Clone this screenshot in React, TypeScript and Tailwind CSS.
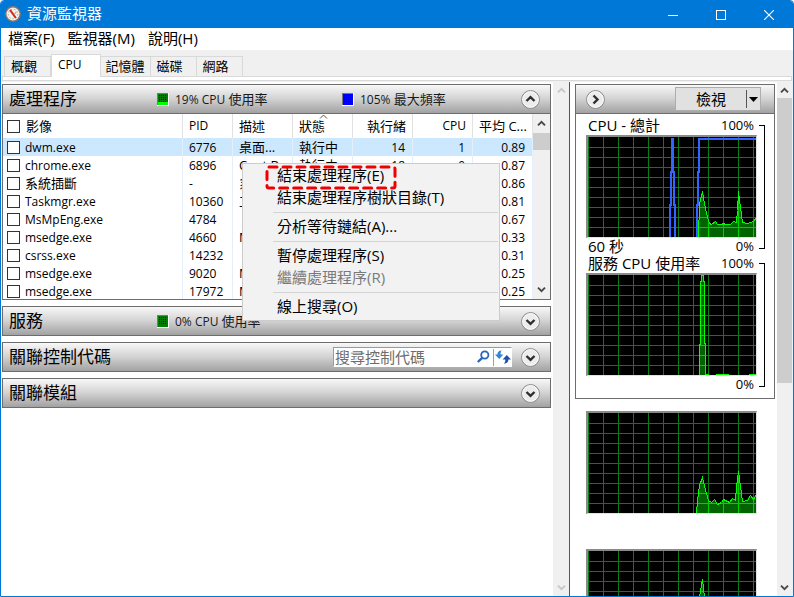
import type { ReactNode } from "react";

type Process = {
  name: string;
  pid: string;
  desc: string;
  status: string;
  threads: string;
  cpu: string;
  avg: string;
};

const processes: Process[] = [
  { name: "dwm.exe", pid: "6776", desc: "桌面...", status: "執行中", threads: "14", cpu: "1", avg: "0.89" },
  { name: "chrome.exe", pid: "6896", desc: "Cent B...", status: "執行中", threads: "18", cpu: "0", avg: "0.87" },
  { name: "系統插斷", pid: "-", desc: "系統...", status: "執行中", threads: "-", cpu: "1", avg: "0.86" },
  { name: "Taskmgr.exe", pid: "10360", desc: "工作...", status: "執行中", threads: "17", cpu: "1", avg: "0.81" },
  { name: "MsMpEng.exe", pid: "4784", desc: "", status: "執行中", threads: "39", cpu: "0", avg: "0.67" },
  { name: "msedge.exe", pid: "4660", desc: "Micro...", status: "執行中", threads: "16", cpu: "0", avg: "0.33" },
  { name: "csrss.exe", pid: "14232", desc: "", status: "執行中", threads: "13", cpu: "0", avg: "0.31" },
  { name: "msedge.exe", pid: "9020", desc: "Micro...", status: "執行中", threads: "45", cpu: "0", avg: "0.25" },
  { name: "msedge.exe", pid: "17972", desc: "Micro...", status: "執行中", threads: "15", cpu: "0", avg: "0.25" },
];

const tabs = ["概觀", "CPU", "記憶體", "磁碟", "網路"];
const menus = ["檔案(F)", "監視器(M)", "說明(H)"];

const cpuTotal =
  "110,100 111,66 113,59 114,54 116,66 119,80 121,86 123,87 127,84 129,87 133,87 135,86 137,87 142,87 145,84 148,85 149,73 150,54 152,70 154,85 159,86 165,84 168,80";
const cpu0 =
  "108,100 109,87 111,72 114,64 116,73 120,87 123,89 126,86 129,91 133,89 135,86 141,89 144,85 147,87 148,73 150,58 152,73 154,88 159,87 162,82 165,86 168,81";
const serviceCpu =
  "111,100 111,69 112,69 112,6 113,6 113,0 115,0 115,6 116,6 116,67 117,69 117,99 120,99 120,100 128,100 128,99 140,99 140,100 161,100 161,99 168,99";
const cpu1 =
  "110,60 111,46 113,34 114,28 116,46 119,70 121,84 127,82 135,85 145,82 149,60 150,50 152,68 154,84 168,80";

export default function App() {
  return (
    <div className="flex h-screen flex-col overflow-hidden rounded-t border border-[#0078d7] bg-white font-['Open_Sans','Noto_Sans_CJK_TC',sans-serif] text-[13px] leading-4 text-black">
      <TitleBar />
      <nav className="flex h-[22px] shrink-0 items-center gap-[13px] px-[7px] pb-[2px] text-[15px] leading-5">
        {menus.map((m) => (
          <button key={m} type="button">
            {m}
          </button>
        ))}
      </nav>

      {/* tab strip */}
      <div className="shrink-0 bg-[#f0f0f0] px-px pb-px pt-1">
        <div role="tablist" className="flex items-end pl-[2px]">
          {tabs.map((t) => (
            <Tab key={t} label={t} active={t === "CPU"} />
          ))}
        </div>
        <div className="h-[5px] border border-[#d9d9d9] bg-white" />
      </div>

      <div className="flex min-h-0 flex-1">
        <main className="flex min-w-0 flex-1 flex-col gap-[6px] overflow-hidden pl-px pr-[2px] pt-[2px]">
          <section className="relative border border-[#6d6d6d]">
            <SectionHeader title="處理程序" open>
              <div className="flex w-[185px] items-center gap-[6px]">
                <Meter kind="green" level={19} />
                <Usage value="19% CPU" label="使用率" />
              </div>
              <div className="flex items-center gap-[6px]">
                <Meter kind="blue" level={0} />
                <Usage value="105%" label="最大頻率" />
              </div>
            </SectionHeader>
            <div className="flex h-[186px] overflow-hidden border-t border-[#6d6d6d]">
              <div className="min-w-0 flex-1">
                <ProcessTable />
              </div>
              <div className="flex w-[17px] flex-col items-center justify-between bg-[#f0f0f0] py-[6px]">
                <div className="flex w-full flex-col items-center gap-[6px]">
                  <Chevron up />
                  <div className="h-[17px] w-full bg-[#cdcdcd]" />
                </div>
                <Chevron />
              </div>
            </div>
            <ContextMenu />
          </section>

          <Section title="服務">
            <div className="flex items-center gap-[6px]">
              <Meter kind="green" level={0} />
              <Usage value="0% CPU" label="使用率" />
            </div>
          </Section>
          <section className="border border-[#6d6d6d]">
            <SectionHeader title="關聯控制代碼" search />
          </section>
          <Section title="關聯模組" />
        </main>

        <div className="flex w-4 shrink-0 flex-col items-center justify-between bg-[#f0f0f0] py-[5px] text-[#b5b5b5]">
          <Chevron up />
          <Chevron />
        </div>

        <Graphs />
      </div>
    </div>
  );
}

function TitleBar() {
  return (
    <header className="flex h-[27px] shrink-0 items-center bg-[#0078d7] pl-[4px] text-white">
      <svg viewBox="0 0 16 16" className="mb-px h-4 w-4">
        <circle cx="8" cy="8" r="7.2" fill="#f4f1ee" stroke="#8b7468" strokeWidth="1.4" />
        <circle cx="8" cy="8" r="4.8" fill="none" stroke="#8fb08c" strokeWidth="1" strokeDasharray="1.5 1.8" />
        <path d="M5 3.8 L10.8 12" stroke="#d02a1c" strokeWidth="2" />
        <path d="M9.4 8.4 L11.2 6" stroke="#b9a58e" strokeWidth="1.2" />
      </svg>
      <h1 className="ml-[6px] flex-1 pb-[3px] text-[15px] leading-5">資源監視器</h1>
      <div className="flex h-full">
        <button type="button" aria-label="最小化" className="grid w-12 place-items-center">
          <svg viewBox="0 0 10 10" className="h-[10px] w-[10px]">
            <path d="M0 5.5 H10" stroke="currentColor" />
          </svg>
        </button>
        <button type="button" aria-label="最大化" className="grid w-12 place-items-center">
          <svg viewBox="0 0 10 10" className="h-[10px] w-[10px]">
            <rect x="0.5" y="0.5" width="9" height="9" fill="none" stroke="currentColor" />
          </svg>
        </button>
        <button type="button" aria-label="關閉" className="grid w-12 place-items-center">
          <svg viewBox="0 0 10 10" className="h-[10px] w-[10px]">
            <path d="M0 0 L10 10 M10 0 L0 10" stroke="currentColor" strokeWidth="1.1" />
          </svg>
        </button>
      </div>
    </header>
  );
}

function Tab({ label, active }: { label: string; active: boolean }) {
  if (active) {
    return (
      <button
        type="button"
        role="tab"
        aria-selected
        className="-mb-px h-[23px] border border-b-0 border-[#d9d9d9] bg-white pb-[2px] pl-[6px] pr-[18px] text-xs"
      >
        {label}
      </button>
    );
  }
  return (
    <button
      type="button"
      role="tab"
      aria-selected={false}
      className="h-5 border border-b-0 border-l-0 border-[#d9d9d9] pb-px pl-[6px] pr-[13px] nth-3:px-[5px] first:border-l"
    >
      {label}
    </button>
  );
}

function Section({ title, children }: { title: string; children?: ReactNode }) {
  return (
    <section className="border border-[#6d6d6d]">
      <SectionHeader title={title}>{children}</SectionHeader>
    </section>
  );
}

function SectionHeader({
  title,
  open,
  search,
  children,
}: {
  title: string;
  open?: boolean;
  search?: boolean;
  children?: ReactNode;
}) {
  return (
    <div className="flex h-[28px] items-center bg-gradient-to-b from-[#f8f8f8] via-[#d2d2d2] to-[#a2a2a2] pl-[6px] pr-[10px]">
      <h2 className="w-[148px] shrink-0 text-[17px] leading-5">{title}</h2>
      <div className="flex flex-1 items-center">{children}</div>
      {search && <SearchBox />}
      <RoundButton label={title}>
        <path d={open ? "M5.5 11 L9.5 7.2 L13.5 11" : "M5.5 8 L9.5 11.8 L13.5 8"} />
      </RoundButton>
    </div>
  );
}

function RoundButton({ label, children }: { label: string; children: ReactNode }) {
  return (
    <button type="button" aria-label={label} className="h-[19px] w-[19px] shrink-0">
      <svg viewBox="0 0 19 19" className="h-[19px] w-[19px]" fill="none">
        <circle cx="9.5" cy="9.5" r="8.9" fill="#ececec" stroke="#858585" />
        <circle cx="9.5" cy="9.5" r="7.8" stroke="#fafafa" />
        <g stroke="#2e2e2e" strokeWidth="2.4">
          {children}
        </g>
      </svg>
    </button>
  );
}

function Usage({ value, label }: { value: string; label: string }) {
  return (
    <p className="whitespace-nowrap text-[#1a1a1a]">
      <span className="text-xs">{value} </span>
      {label}
    </p>
  );
}

function Meter({ kind, level }: { kind: "green" | "blue"; level: number }) {
  const fill = Math.round((level / 100) * 16);
  const dots = [2, 4, 6, 8];
  return (
    <svg viewBox="0 0 12 13" className="h-[13px] w-[12px]" shapeRendering="crispEdges">
      <rect width="12" height="13" fill="#fff" />
      <rect width="11" height="12" fill="#777" />
      <rect x="1" y="1" width="10" height="11" fill={kind === "green" ? "#008000" : "#0000ff"} />
      {dots.map((x) =>
        dots.map((y) => (
          <rect key={`${x}-${y}`} x={x} y={y} width="1" height="1" fill={kind === "green" ? "#002800" : "#0000a8"} />
        )),
      )}
      {fill > 0 && <rect x="1" y={12 - fill} width="10" height={fill} fill="#00ff00" />}
    </svg>
  );
}

function SearchBox() {
  return (
    <div className="mr-[9px] flex h-5 w-[179px] items-center border border-b-white border-l-[#9a9a9a] border-r-white border-t-[#9a9a9a] bg-white">
      <input
        type="text"
        aria-label="搜尋控制代碼"
        placeholder="搜尋控制代碼"
        className="h-full min-w-0 flex-1 pb-px pl-px text-[15px] leading-4 outline-none placeholder:text-[#6d6d6d]"
      />
      <button type="button" aria-label="搜尋">
        <svg viewBox="0 0 14 14" className="h-[14px] w-[14px]" fill="none" stroke="#2a66b8">
          <circle cx="8.8" cy="5" r="3.6" strokeWidth="1.8" />
          <path d="M6.2 7.8 L1.8 12" strokeWidth="2.4" />
        </svg>
      </button>
      <div className="ml-[3px] mr-px h-[17px] w-px bg-[#a0a0a0]" />
      <button type="button" aria-label="重新整理">
        <svg viewBox="0 0 16 14" className="h-[14px] w-4">
          <path d="M6.8 0.4 C3.6 0.6 2.4 2 2.4 4.4 H0 L4.2 9 L8.4 4.4 H5.6 C5.5 2.8 5.8 1.4 6.8 0.4 Z" fill="#2f86d6" />
          <path d="M8.8 13.8 C12 13.6 13.4 12.2 13.4 9.6 H16 L11.8 5 L7.6 9.6 H10.3 C10.4 11.4 10 12.8 8.8 13.8 Z" fill="#1f52a6" />
        </svg>
      </button>
    </div>
  );
}

function Chevron({ up }: { up?: boolean }) {
  return (
    <svg viewBox="0 0 9 7" className="h-[7px] w-[9px]" fill="none">
      <path
        d={up ? "M1 5.4 L4.5 1.9 L8 5.4" : "M1 1.6 L4.5 5.1 L8 1.6"}
        stroke="currentColor"
        strokeWidth="1.9"
        strokeOpacity="0.7"
      />
    </svg>
  );
}

function Check({ label }: { label: string }) {
  return (
    <input
      type="checkbox"
      aria-label={label}
      className="h-[13px] w-[13px] shrink-0 appearance-none border border-[#333] bg-white"
    />
  );
}

function ProcessTable() {
  const head = "border-r border-[#e2e2e2] px-[6px] font-normal";
  const cell = "overflow-hidden whitespace-nowrap border-r border-[#e3f0fb] pl-[6px]";
  return (
    <table className="w-full table-fixed border-separate border-spacing-0">
      <colgroup>
        <col />
        <col className="w-[50px]" />
        <col className="w-[60px]" />
        <col className="w-[60px]" />
        <col className="w-[60px]" />
        <col className="w-[60px]" />
        <col className="w-[60px]" />
      </colgroup>
      <thead>
        <tr className="h-6 text-left text-[13px]">
          <th className="border-r border-[#e2e2e2] pl-1 font-normal">
            <div className="flex items-center gap-[6px]">
              <Check label="影像" />
              影像
            </div>
          </th>
          <th className={`${head} text-xs`}>PID</th>
          <th className={head}>描述</th>
          <th className={`${head} relative`}>
            狀態
            <svg viewBox="0 0 9 5" className="absolute left-1/2 top-0 -ml-1 h-[5px] w-[9px]" fill="none">
              <path d="M1 4.5 L4.5 1 L8 4.5" stroke="#555" />
            </svg>
          </th>
          <th className={`${head} text-right`}>執行緒</th>
          <th className={`${head} text-right text-xs`}>CPU</th>
          <th className={`${head} whitespace-nowrap`}>平均 C...</th>
        </tr>
      </thead>
      <tbody>
        {processes.map((p, i) => (
          <tr key={p.pid} className={i === 0 ? "h-[18px] bg-[#cce8ff]" : "h-[18px]"}>
            <td className="border-r border-[#e3f0fb] pl-1">
              <div className="flex items-center gap-[5px]">
                <Check label={p.name} />
                <span className={p.name === "系統插斷" ? "text-[13px]" : "pt-px text-xs"}>{p.name}</span>
              </div>
            </td>
            <td className={`${cell} pt-px text-xs`}>{p.pid}</td>
            <td className={cell}>{p.desc}</td>
            <td className={cell}>{p.status}</td>
            <td className={`${cell} pr-[7px] pt-px text-right text-xs`}>{p.threads}</td>
            <td className={`${cell} pr-[7px] pt-px text-right text-xs`}>{p.cpu}</td>
            <td className={`${cell} pr-[7px] pt-px text-right text-xs`}>{p.avg}</td>
          </tr>
        ))}
      </tbody>
    </table>
  );
}

function ContextMenu() {
  return (
    <div
      role="menu"
      className="absolute left-[239px] top-[78px] z-10 w-[258px] border border-[#ccc] bg-[#f2f2f2] pb-[2px] pt-px text-[15px]"
    >
      <MenuItem>結束處理程序(E)</MenuItem>
      <MenuItem>結束處理程序樹狀目錄(T)</MenuItem>
      <Separator />
      <MenuItem>分析等待鏈結(A)...</MenuItem>
      <Separator />
      <MenuItem>暫停處理程序(S)</MenuItem>
      <MenuItem disabled>繼續處理程序(R)</MenuItem>
      <Separator />
      <MenuItem>線上搜尋(O)</MenuItem>
      <svg
        viewBox="0 0 132 26"
        className="pointer-events-none absolute left-[22px] top-px h-[26px] w-[132px]"
        fill="none"
      >
        <rect
          x="2"
          y="2"
          width="128"
          height="21"
          rx="2"
          stroke="#f00000"
          strokeWidth="3"
          strokeDasharray="8 6"
          strokeLinecap="round"
        />
      </svg>
    </div>
  );
}

function MenuItem({ disabled, children }: { disabled?: boolean; children: ReactNode }) {
  return (
    <button
      type="button"
      role="menuitem"
      disabled={disabled}
      className="block h-[22px] w-full pb-[2px] pl-[34px] text-left leading-5 disabled:text-[#7a7a7a]"
    >
      {children}
    </button>
  );
}

function Separator() {
  return <div className="my-[3px] ml-[30px] mr-px h-px bg-[#d4d4d4]" />;
}

function Graphs() {
  return (
    <aside className="flex w-[224px] shrink-0 border-l border-[#555]">
      <div className="min-w-0 flex-1 overflow-hidden pl-[5px] pr-[2px] pt-[2px]">
        <div className="border border-[#6d6d6d]">
          <div className="flex h-[29px] items-center justify-between border-b border-[#6d6d6d] bg-gradient-to-b from-[#f8f8f8] via-[#d2d2d2] to-[#a2a2a2] pl-[10px] pr-[13px]">
            <RoundButton label="隱藏圖表">
              <path d="M7.5 5.5 L11.5 9.5 L7.5 13.5" />
            </RoundButton>
            <button
              type="button"
              className="flex h-6 w-[86px] items-center border border-[#adadad] bg-[#e1e1e1] text-[15px]"
            >
              <span className="flex-1 pb-px">檢視</span>
              <span className="h-[18px] w-px bg-[#555]" />
              <svg viewBox="0 0 9 5" className="mx-[2px] h-[5px] w-[9px]">
                <path d="M0 0 H9 L4.5 5 Z" />
              </svg>
            </button>
          </div>
          <div className="pb-[6px] pl-[10px] pt-[2px]">
            <LabelledChart title="CPU - 總計" span="60 秒" points={cpuTotal} frequency />
            <LabelledChart title="服務 CPU 使用率" points={serviceCpu} />
          </div>
        </div>
        <div className="flex flex-col gap-[35px] pl-[11px] pt-3">
          <Chart points={cpu0} />
          <Chart points={cpu1} />
        </div>
      </div>
      <div className="flex w-4 flex-col items-center justify-between bg-[#f0f0f0] py-[5px] pr-px">
        <div className="flex w-full flex-col items-center gap-1">
          <Chevron up />
          <div className="h-[285px] w-full bg-[#cdcdcd]" />
        </div>
        <Chevron />
      </div>
    </aside>
  );
}

function LabelledChart({
  title,
  span,
  points,
  frequency,
}: {
  title: string;
  span?: string;
  points: string;
  frequency?: boolean;
}) {
  return (
    <div className="flex gap-[2px]">
      <div className="w-[171px]">
        <div className="flex h-[19px] items-center justify-between pb-[2px] pl-[2px] pr-[3px] text-[15px]">
          <h3 className="whitespace-nowrap">{title}</h3>
          <span className="text-[13px]">100%</span>
        </div>
        <Chart points={points} frequency={frequency} />
        <div className="flex h-4 items-center justify-between pb-px pl-[2px] pr-[3px] text-[15px]">
          <span>{span}</span>
          <span className="text-[13px]">0%</span>
        </div>
      </div>
      <div className="mt-[9px] h-[124px] w-[6px] border border-l-0 border-black" />
    </div>
  );
}

function Chart({ points, frequency }: { points: string; frequency?: boolean }) {
  const columns = Array.from({ length: 12 }, (_, i) => i * 15 + 0.5);
  const rows = Array.from({ length: 9 }, (_, i) => i * 10 + 10.5);
  const lines = columns.map((x) => `M${x} 0 V100`).concat(rows.map((y) => `M0 ${y} H168`)).join(" ");
  const area = `${points} 168,100 ${points.split(",")[0]},100`;
  const clipId = `area-${points.length}-${points.slice(0, 3)}`;
  return (
    <div className="w-[171px] border-b border-l-2 border-r border-t-2 border-b-[#e3e3e3] border-l-[#8a8a8a] border-r-[#e3e3e3] border-t-[#8a8a8a]">
      <svg viewBox="0 0 168 100" className="block h-[100px] w-full bg-black" fill="none" shapeRendering="crispEdges">
        <clipPath id={clipId}>
          <polygon points={area} />
        </clipPath>
        <path d={lines} stroke="#0a7c14" />
        <polygon points={area} fill="#006400" />
        <path d={lines} stroke="#00d200" clipPath={`url(#${clipId})`} />
        <polyline points={points} stroke="#00ff00" transform="translate(0.5 0.5)" />
        {frequency && (
          <path
            d="M82 100 V68 H83 V35 H84 V1 M87 100 V68 H86 V35 H85 V1 M109 100 V68 H110 V35 H111 V2 H168"
            stroke="#2f66ff"
            strokeWidth="2"
          />
        )}
      </svg>
    </div>
  );
}
